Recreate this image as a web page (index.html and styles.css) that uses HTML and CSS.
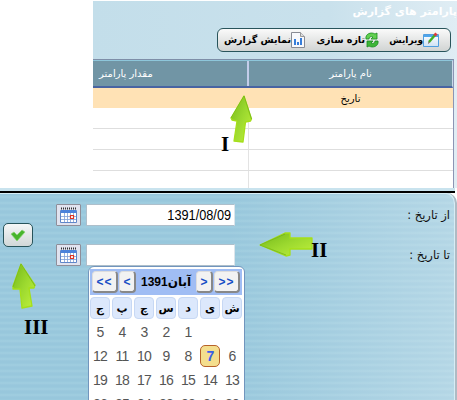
FILE: index.html
```html
<!DOCTYPE html>
<html lang="fa">
<head>
<meta charset="utf-8">
<title>پارامتر های گزارش</title>
<link rel="stylesheet" href="styles.css">
</head>
<body>
<svg class="defs" aria-hidden="true">
  <defs>
    <linearGradient id="green" x1="0" y1="0" x2="1" y2="1"><stop offset="0" stop-color="#74b81b"/><stop offset=".5" stop-color="#9cd92f"/><stop offset="1" stop-color="#c0f03c"/></linearGradient>
    <linearGradient id="sheet" x1="0" y1="0" x2="0" y2="1"><stop offset="0" stop-color="#fff"/><stop offset="1" stop-color="#cfe2f5"/></linearGradient>
    <symbol id="calendar" viewBox="0 0 17 17"><path d="M.5 3.500h16v12H.5z" fill="#fff" stroke="#5f86c8"/><path d="M1 3h15v3H1z" fill="#4c83db"/><path d="M4.500 6v9M7.500 6v9M10.500 6v9M13.500 6v9M1 9.500h15M1 12.500h15" stroke="#7fa0d8" stroke-width=".8"/><path d="M1 1.500h15" stroke="#333" stroke-dasharray="1 1" stroke-width="2"/><path d="M10.500 8.500h3v3h-3z" fill="#fff" stroke="#df3423" stroke-width="1.200"/></symbol>
  </defs>
</svg>
<main class="page">
  <section class="report" dir="rtl">
    <h1>پارامتر های گزارش</h1>
    <div class="toolbar">
      <span class="tool edit"><svg width="16" height="16" viewBox="0 0 16 16"><path d="M.5 2.500h15v12H.5z" fill="url(#sheet)" stroke="#509edf"/><path d="M1 3h14v2H1z" fill="#4fa5eb"/><path d="M6 10 12 3" stroke="#43af25" stroke-width="2.500"/><path d="m11.500 3.500 2-2" stroke="#df3b3b" stroke-width="3"/><path d="m5 12 .5-2.500 1.500 1z" fill="#776655"/></svg><b>ویرایش</b></span>
      <span class="tool refresh"><svg width="14" height="16" viewBox="0 0 14 16"><path d="M1 7C0 2 6-.5 10 2l2-1v6H6l2-2C6 4 4 5 4 7z" fill="#62d050" stroke="#168b1d" stroke-width=".8"/><path d="M13 9c1 5-5 7.500-9 5l-2 1V9h6l-2 2c2 1 4 0 4-2z" fill="#3eb637" stroke="#168b1d" stroke-width=".8"/></svg><b>تازه سازی</b></span>
      <span class="tool show"><svg width="14" height="16" viewBox="0 0 14 16"><path d="M.5.5h9l4 4v11H.5z" fill="#f8f9fc" stroke="#888b94"/><path d="M9.500.5v4h4" fill="#ddd" stroke="#999"/><path d="M3 7h2v6H3zM6 10h2v3H6zM9 6h2v7H9z" fill="#367dd9"/></svg><b>نمایش گزارش</b></span>
    </div>
    <div class="table">
      <div class="row head"><div><span>نام پارامتر</span></div><div><span>مقدار پارامتر</span></div></div>
      <div class="row selected"><div><span>تاریخ</span></div><div></div></div>
      <div class="row"><div></div><div></div></div>
      <div class="row"><div></div><div></div></div>
      <div class="row"><div></div><div></div></div>
      <div class="row last"><div></div><div></div></div>
    </div>
  </section>
  <div class="divider"></div>
  <section class="form">
    <div class="confirm"><button class="ok"><svg width="16" height="13" viewBox="0 0 16 13"><path d="m1 5 3-2 3 3 5-5 3 2-8 9z" fill="#48b52c" stroke="#8ad374" stroke-width=".7"/></svg></button></div>
    <div class="fields">
      <div class="field"><button class="pick"><svg width="17" height="17"><use href="#calendar"/></svg></button><div class="input"><span>1391/08/09</span></div></div>
      <div class="field"><button class="pick"><svg width="17" height="17"><use href="#calendar"/></svg></button><div class="input"></div></div>
    </div>
    <div class="labels" dir="rtl"><div>از تاریخ :</div><div>تا تاریخ :</div></div>
    <div class="popup">
      <div class="month"><button class="wide">&lt;&lt;</button><button>&lt;</button><strong dir="rtl">آبان1391</strong><button>&gt;</button><button class="wide">&gt;&gt;</button></div>
      <div class="days"><b>ج</b><b>پ</b><b>چ</b><b>س</b><b>د</b><b>ی</b><b>ش</b></div>
      <div class="dates">
        <span>5</span><span>4</span><span>3</span><span>2</span><span>1</span><span></span><span></span>
        <span>12</span><span>11</span><span>10</span><span>9</span><span>8</span><span class="today">7</span><span>6</span>
        <span>19</span><span>18</span><span>17</span><span>16</span><span>15</span><span>14</span><span>13</span>
        <span>26</span><span>25</span><span>24</span><span>23</span><span>22</span><span>21</span><span>20</span>
      </div>
    </div>
  </section>
  <svg class="mark a1" viewBox="0 0 24 49"><path d="M14 1 21.500 24 20.500 26 15.500 27 13 47 4 46 7 26 2 25 1 23Z" fill="url(#green)" stroke="#a5df19" stroke-linejoin="round" stroke-width="1.300"/><path d="M14 1 1 23M14 1 21.500 24" fill="none" stroke="#6cad1e" stroke-width=".7"/></svg><span class="numeral n1">I</span>
  <svg class="mark a2" viewBox="0 0 54 26"><path d="M1 13 26 1 31 1 31 6 53 6 53 17 31 17 31 23 27 24Z" fill="url(#green)" stroke="#a5df19" stroke-width="1.300" stroke-linejoin="round"/><path d="M1 13 26 2M1 13 27 23" stroke="#6cad1e" stroke-width=".7"/></svg><span class="numeral n2">II</span>
  <svg class="mark a3" viewBox="0 0 24 46"><path d="M9 1 23 22 22 25 17 25 20 43 10 45 8 26 1 26 1 23Z" fill="url(#green)" stroke="#a5df19" stroke-width="1.300" stroke-linejoin="round"/><path d="M1 24 9 1 23 23" fill="none" stroke="#6cad1e" stroke-width=".7"/></svg><span class="numeral n3">III</span>
</main>
</body>
</html>
```
FILE: styles.css
```css
* { box-sizing: border-box; }
body { margin: 0; background: #fff; font-family: "DejaVu Sans", "Liberation Sans", sans-serif; overflow: hidden; }
.defs { position: absolute; width: 0; height: 0; }
.page { position: relative; width: 457px; height: 400px; overflow: hidden; }
.report { margin: 1px 0 0 93px; width: 364px; height: 187px; padding-right: 3px; background: linear-gradient(90deg, #c3deea, #c9e1ec 65%, #e0edf4); overflow: hidden; }
h1 { margin: 0 -3px 0 0; height: 27px; font-size: 11px; line-height: 22px; color: #fff; white-space: nowrap; }
.toolbar { margin-right: 3px; width: 234px; height: 24px; display: flex; align-items: center; border: 1px solid #28545b; border-radius: 6px; background: linear-gradient(#fafafa, #d1d4d3); padding: 0 11px 0 0; }
.tool { display: flex; align-items: center; white-space: nowrap; font-size: 9.5px; }
.tool b { line-height: 20px; }
.tool svg { flex: none; }
.edit { width: 60px; font-size: 9px; }
.refresh { width: 74px; }
.table { margin-top: 7px; border-top: 1px solid #7e8ea8; border-right: 1px solid #8c94b4; height: 129px; overflow: hidden; }
.row { display: grid; grid-template-columns: 205px 1fr; height: 21px; border-bottom: 1px solid #dedede; background: #fff; }
.row > div { display: flex; justify-content: center; align-items: center; white-space: nowrap; }
.row > div:first-child { border-left: 1px solid #e3e3e3; }
.row.head { height: 28px; border-top: 1px solid #8ec6da; border-bottom: 2px solid #4864a2; border-right: 1px solid #c8d9e9; background: #7195a5; color: #fff; font-size: 10px; }
.row.head > div:first-child { border-left: 2px solid #c3cdea; }
.row.head > div:last-child { justify-content: flex-end; padding-left: 6px; }
.row.selected { height: 20px; background: #ffe2b5; border: 0; font-size: 10px; }
.row.selected > div:first-child { border: 0; }
.row.last { border: 0; }
.divider { width: 455px; height: 5px; border-top: 3px solid #c9e3ee; background: #000; }
.form { position: relative; width: 457px; height: 207px; display: flex; border-right: 2px solid #aebbc4; background: linear-gradient(90deg, transparent 50%, rgba(255,255,255,.28)), repeating-linear-gradient(#98c7dc 0 2px, #a1cee0 4px, #98c7dc 6px); box-shadow: inset -1px 1px #d7edf5; border-radius: 0 10px 0 0; }
.confirm { width: 56px; padding: 30px 0 0 3px; }
button { display: flex; align-items: center; justify-content: center; padding: 0; font-family: "Liberation Sans", sans-serif; }
.ok { width: 30px; height: 24px; border: 1px solid #28545b; border-radius: 5px; background: linear-gradient(#f5f7f7, #d1d7d8); }
.fields { width: 179px; padding-top: 11px; }
.field { display: flex; gap: 5px; height: 40px; }
.pick { width: 25px; height: 22px; border: 1px solid #8f8e99; border-radius: 1px; background: #e1e3ef; }
.input { width: 149px; height: 22px; background: #fff; border: 1px solid #aebfcb; border-right-color: #dce5eb; padding-right: 3px; text-align: right; font: 14px/20px "Liberation Sans", sans-serif; }
.input span { display: inline-block; transform: scaleX(.91); transform-origin: right; }
.labels { flex: 1; padding: 12px 5px 0 0; color: #111; font-size: 11.5px; }
.labels div { height: 40px; line-height: 20px; }
.popup { position: absolute; left: 88px; top: 73px; width: 157px; height: 180px; border: 1px solid #7195bd; border-radius: 6px; padding: 2px 2px 2px 1px; background: #fff; }
.month { display: flex; align-items: center; gap: 1px; background: #a0bdf4; height: 26px; padding: 2px; }
.month button { width: 17px; height: 22px; border: 1px solid #ddd; border-right: 2px solid #888; border-bottom: 2px solid #888; border-radius: 4px; background: #f2f2f2; color: #174cc5; font-weight: bold; font-size: 12px; }
.month .wide { width: 26px; letter-spacing: 1px; }
.month strong { flex: 1; text-align: center; font: bold 12px "Liberation Sans", "DejaVu Sans", sans-serif; white-space: nowrap; }
.days { display: grid; grid-template-columns: repeat(7, 22px); padding-top: 2px; }
.days b { width: 20px; height: 22px; border: 1px solid #c7d8f4; border-radius: 4px; background: #dce8fc; text-align: center; font-size: 11px; line-height: 22px; }
.dates { display: grid; grid-template-columns: repeat(7, 22px); grid-auto-rows: 24px; padding-top: 2px; font: 14px/23px "Liberation Sans", sans-serif; letter-spacing: -.8px; color: #555; }
.dates span { width: 20px; height: 22px; text-align: center; }
.dates .today { line-height: 21px; border: 1px solid #b7622a; border-radius: 5px; background: #f4de8d; color: #3b5ee8; font-weight: bold; }
.mark { position: absolute; display: block; }
.a1 { left: 230px; top: 95px; width: 24px; height: 49px; }
.a2 { left: 259px; top: 232px; width: 54px; height: 26px; }
.a3 { left: 12px; top: 263px; width: 24px; height: 46px; }
.numeral { position: absolute; font: bold 21px/24px "Liberation Serif", serif; color: #000; }
.n1 { left: 221px; top: 132px; }
.n2 { left: 311px; top: 238px; }
.n3 { left: 24px; top: 315px; }
```
